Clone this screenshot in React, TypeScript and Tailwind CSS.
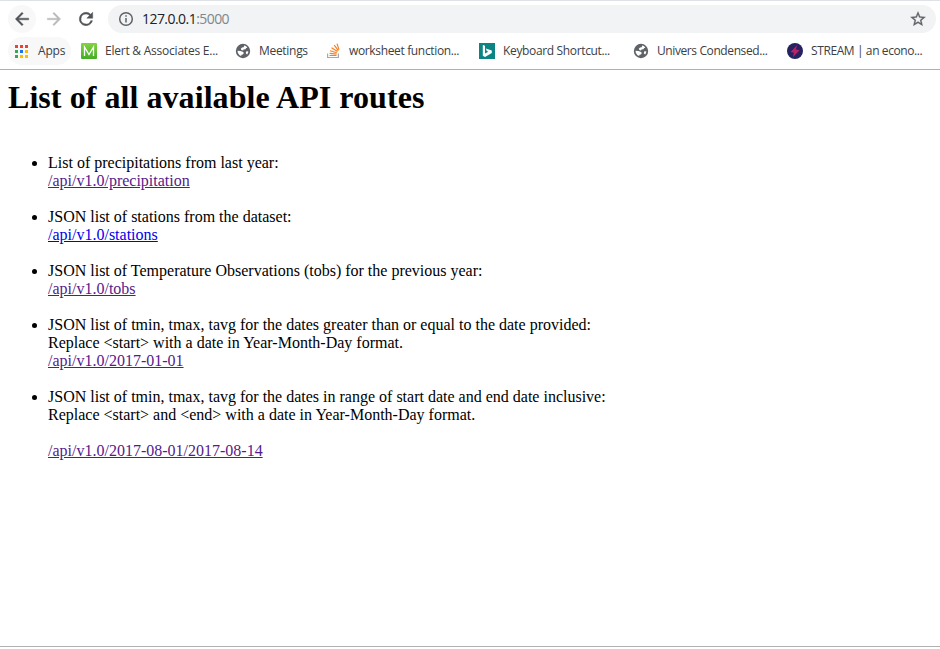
import type { ReactNode } from "react";

const GlobeIcon = () => (
  <svg width="16" height="16" viewBox="0 0 16 16">
    <circle cx="8" cy="8" r="7.200" fill="#5f6368" />
    <path
      d="M9.200 2.600c1.400.3 2.500 1.100 3.200 2.200l-1.200.3-.8 1.100-2 .2-.3 1-1.700-.3-.6-1.300 1.200-1.200 1.700-.4zM2.500 7.700l3 .3 2.700 1 .6 1.300-1 1.200-1.300.2-.4 1.400C4 12.200 2.500 10.200 2.500 7.700z"
      fill="#fff"
    />
    <path d="M11 8.500l2.300-.2c0 1.300-.5 2.300-1.200 3.100l-1.200-.9z" fill="#fff" />
  </svg>
);

const GreenMIcon = () => (
  <svg width="16" height="16" viewBox="0 0 16 16">
    <defs>
      <linearGradient id="green" x1="0" y1="0" x2="0" y2="1">
        <stop offset="0" stopColor="#83d343" />
        <stop offset="1" stopColor="#43ad25" />
      </linearGradient>
    </defs>
    <rect width="16" height="16" rx="1" fill="url(#green)" />
    <path d="M3.500 13V4L8 11.500 12.500 4v9" fill="none" stroke="#fff" strokeWidth="1.300" />
  </svg>
);

const StackIcon = () => (
  <svg width="14" height="16" viewBox="0 0 14 16">
    <path d="M.6 10.500v4h10.800v-4" fill="none" stroke="#a7a9ac" strokeWidth="1.200" />
    <path
      d="M2.500 12.500h7M2.600 10.300l7 .8M3 7.700l6.800 2.100M4.500 4.700l6 3.900M7.200 2.200l4.200 5.500M10 .6l2 6"
      stroke="#f48024"
      strokeWidth="1.200"
      fill="none"
    />
  </svg>
);

const BingIcon = () => (
  <svg width="16" height="16" viewBox="0 0 16 16">
    <path d="M0 0h16v16H0z" fill="#0c8484" />
    <path d="M3.800 2l2.200.8v7.800l3.300-1.900-1.500-.8-1-2.500 6 2.200v2.500L6 13.900 3.800 12.700z" fill="#fff" />
  </svg>
);

const StreamIcon = () => (
  <svg width="16" height="16" viewBox="0 0 16 16">
    <circle cx="8" cy="8" r="8" fill="#262262" />
    <path d="M10 2.300L3.600 9l3.400.7-1.200 4.500 6.800-7-3.700-.8z" fill="#b5246b" />
  </svg>
);

const AppsIcon = () => {
  const colors = ["#ea4335", "#ea4335", "#ea4335", "#34a853", "#1a73e8", "#fbbc04", "#34a853", "#fbbc04", "#fbbc04"];
  return (
    <svg width="13" height="13" viewBox="0 0 13 13" shapeRendering="crispEdges">
      {colors.map((c, i) => (
        <rect key={i} x={(i % 3) * 5} y={Math.floor(i / 3) * 5} width="3" height="3" fill={c} />
      ))}
    </svg>
  );
};

const Bookmark = ({
  icon,
  label,
  width,
  tracking,
  iconWidth = "w-6",
}: {
  icon: ReactNode;
  label: string;
  width: string;
  tracking: string;
  iconWidth?: string;
}) => (
  <div className={`flex h-7 shrink-0 items-center ${width}`}>
    <span className={`flex shrink-0 ${iconWidth}`}>{icon}</span>
    <span className={`whitespace-nowrap ${tracking}`}>{label}</span>
  </div>
);

const routes = [
  { lines: ["List of precipitations from last year:"], href: "/api/v1.0/precipitation", color: "text-[#551a8b]" },
  { lines: ["JSON list of stations from the dataset:"], href: "/api/v1.0/stations", color: "text-[#0000ee]" },
  {
    lines: ["JSON list of Temperature Observations (tobs) for the previous year:"],
    href: "/api/v1.0/tobs",
    color: "text-[#551a8b]",
  },
  {
    lines: [
      "JSON list of tmin, tmax, tavg for the dates greater than or equal to the date provided:",
      "Replace <start> with a date in Year-Month-Day format.",
    ],
    href: "/api/v1.0/2017-01-01",
    color: "text-[#551a8b]",
  },
  {
    lines: [
      "JSON list of tmin, tmax, tavg for the dates in range of start date and end date inclusive:",
      "Replace <start> and <end> with a date in Year-Month-Day format.",
      "",
    ],
    href: "/api/v1.0/2017-08-01/2017-08-14",
    color: "text-[#551a8b]",
  },
];

export default function App() {
  return (
    <div className="flex h-[649px] w-[940px] flex-col overflow-hidden bg-white">
      <header className="h-[70px] shrink-0 border-t border-b border-t-[#dee1e6] border-b-[#b0b0b0] font-['Open_Sans',sans-serif] text-[#3c4043]">
        <div className="flex h-8 items-center pt-1 pr-1 pl-2">
          <div className="flex size-7 items-center justify-center rounded-full bg-[#f8f8f8]">
            <svg width="20" height="20" viewBox="0 0 24 24" fill="#505357" stroke="#505357" strokeWidth="0.500">
              <path d="M20 11H7.830l5.590-5.590L12 4l-8 8 8 8 1.410-1.410L7.830 13H20v-2z" />
            </svg>
          </div>
          <div className="ml-1 flex size-7 items-center justify-center">
            <svg width="20" height="20" viewBox="0 0 24 24" fill="#b9babc" stroke="#b9babc" strokeWidth="0.400">
              <path d="M12 4l-1.410 1.410L16.170 11H4v2h12.170l-5.580 5.590L12 20l8-8z" />
            </svg>
          </div>
          <div className="ml-1 flex size-7 items-center justify-center">
            <svg width="20" height="20" viewBox="0 0 24 24" fill="#505357" stroke="#505357" strokeWidth="0.600">
              <path d="M17.650 6.350A7.960 7.960 0 0 0 12 4a8 8 0 1 0 7.730 10h-2.080A6 6 0 1 1 12 6c1.660 0 3.140.69 4.220 1.780L13 11h7V4l-2.350 2.350z" />
            </svg>
          </div>
          <div className="ml-2 flex h-7 flex-1 items-center rounded-full bg-[#f1f3f4] pr-[9px] pl-[10px]">
            <svg width="16" height="16" viewBox="0 0 16 16" fill="none" stroke="#5f6368" strokeWidth="1.500">
              <circle cx="8" cy="8" r="6.300" />
              <path d="M8 7v4.500M8 4.200v1.600" />
            </svg>
            <span className="mb-[2px] ml-2 text-[14px] tracking-[-0.55px] text-[#202124]">
              127.0.0.1<span className="text-[#80868b]">:5000</span>
            </span>
            <svg className="ml-auto" width="18" height="18" viewBox="0 0 24 24" fill="#5f6368" stroke="#5f6368" strokeWidth="0.400">
              <path d="M22 9.240l-7.190-.62L12 2 9.190 8.630 2 9.240l5.460 4.730L5.820 21 12 17.270 18.180 21l-1.630-7.030L22 9.240zM12 15.400l-3.760 2.270 1-4.280-3.320-2.880 4.380-.38L12 6.100l1.710 4.040 4.380.38-3.320 2.880 1 4.280L12 15.400z" />
            </svg>
          </div>
        </div>
        <div className="flex pt-1 pl-2 text-[12px]">
          <div className="mr-[10px] flex h-7 w-[63px] shrink-0 items-center rounded-full bg-[#f8f8f8] pl-[7px]">
            <AppsIcon />
            <span className="ml-[10px] tracking-[-0.2px]">Apps</span>
          </div>
          <Bookmark icon={<GreenMIcon />} label="Elert & Associates E..." width="w-[154px]" tracking="tracking-[-0.230px]" />
          <Bookmark icon={<GlobeIcon />} label="Meetings" width="w-[92px]" tracking="tracking-[-0.3px]" />
          <Bookmark icon={<StackIcon />} label="worksheet function..." width="w-[152px]" tracking="tracking-[-0.35px]" iconWidth="w-[22px]" />
          <Bookmark icon={<BingIcon />} label="Keyboard Shortcut..." width="w-[154px]" tracking="tracking-[-0.35px]" />
          <Bookmark icon={<GlobeIcon />} label="Univers Condensed..." width="w-[154px]" tracking="tracking-[-0.4px]" />
          <Bookmark icon={<StreamIcon />} label="STREAM | an econo..." width="w-[153px]" tracking="tracking-[-0.4px]" />
        </div>
      </header>
      <main className="flex-1 px-2 font-['Liberation_Serif',serif] text-[16px] leading-[18px] text-black">
        <h1 className="pt-[9px] text-[32px] leading-[37px] font-bold tracking-[0.060px]">List of all available API routes</h1>
        <ul className="list-disc pt-[38px] pl-10">
          {routes.map((route) => (
            <li key={route.href} className="mb-[18px]">
              {route.lines.map((line, i) => (
                <p key={i} className="min-h-[18px]">{line}</p>
              ))}
              <a className={`block w-fit underline ${route.color}`} href={route.href}>
                {route.href}
              </a>
            </li>
          ))}
        </ul>
      </main>
      <footer className="h-[3px] shrink-0 border-t border-[#b0b0b0] bg-white" />
    </div>
  );
}
